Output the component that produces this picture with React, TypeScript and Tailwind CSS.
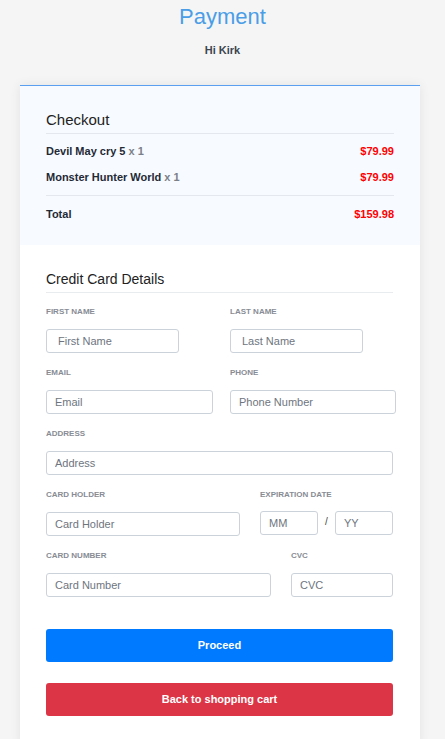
const font = { fontFamily: '"Liberation Sans", Arial, sans-serif' };

type Item = { name: string; qty: number; price: string };

const items: Item[] = [
  { name: 'Devil May cry 5', qty: 1, price: '$79.99' },
  { name: 'Monster Hunter World', qty: 1, price: '$79.99' },
];

const Label = ({ children }: { children: React.ReactNode }) => (
  <div className="text-[8px] leading-[10px] font-bold uppercase text-[#888c94] mb-[11px]">
    {children}
  </div>
);

const Input = ({
  placeholder,
  className = '',
}: {
  placeholder: string;
  className?: string;
}) => (
  <input
    placeholder={placeholder}
    className={`h-[24px] border border-[#ccd2da] rounded-[3px] bg-white text-[11px] text-[#333] placeholder:text-[#6e7580] outline-none px-[8px] ${className}`}
    style={font}
  />
);

/**
 * Payment page
 */
const App = () => {
  return (
    <div className="min-h-screen bg-[#f5f5f5] text-[#222]" style={font}>
      {/* Header */}
      <header className="pt-[4px] text-center">
        <h1 className="text-[22px] leading-[26px] text-[#4a9de6]">Payment</h1>
        <p className="mt-[13px] text-[11px] leading-[14px] font-bold text-[#3d4650]">
          Hi Kirk
        </p>
      </header>

      {/* Card */}
      <div className="mt-[28px] ml-[20px] w-[400px] bg-white border-t border-[#5a9ff0] shadow-[0_0_10px_rgba(0,0,0,0.08)]">
        {/* Checkout */}
        <section className="bg-[#f7faff] px-[26px] pt-[25px] pb-[24px]">
          <h2 className="text-[15px] leading-[18px] pb-[4px] border-b border-[#e4e8ee]">
            Checkout
          </h2>
          <div className="pt-[10px] pb-[11px] border-b border-[#e4e8ee] space-y-[12px]">
            {items.map((item, index) => (
              <div
                key={index}
                className="flex justify-between text-[11px] leading-[14px] font-bold"
              >
                <span className="text-[#1f2a36]">
                  {item.name} <span className="text-[#7b8088]">x {item.qty}</span>
                </span>
                <span className="text-[#ff0000]">{item.price}</span>
              </div>
            ))}
          </div>
          <div className="pt-[11px] flex justify-between text-[11px] leading-[14px] font-bold">
            <span className="text-[#1f2a36]">Total</span>
            <span className="text-[#ff0000]">$159.98</span>
          </div>
        </section>

        {/* Credit Card Details */}
        <section className="pr-[27px] pl-[26px] pt-[25px] pb-[30px]">
          <h2 className="text-[14px] leading-[18px] pb-[4px] border-b border-[#e9ecef]">
            Credit Card Details
          </h2>

          <div className="pt-[14px] space-y-[15px]">
            <div className="grid grid-cols-[166px_1fr] gap-x-[18px]">
              <div>
                <Label>First name</Label>
                <Input placeholder="First Name" className="w-[133px] px-[11px]" />
              </div>
              <div>
                <Label>Last name</Label>
                <Input placeholder="Last Name" className="w-[133px] px-[11px]" />
              </div>
            </div>

            <div className="grid grid-cols-[167px_1fr] gap-x-[17px]">
              <div>
                <Label>Email</Label>
                <Input placeholder="Email" className="w-full" />
              </div>
              <div>
                <Label>Phone</Label>
                <Input placeholder="Phone Number" className="w-[166px]" />
              </div>
            </div>

            <div>
              <Label>Address</Label>
              <Input placeholder="Address" className="w-full" />
            </div>

            <div className="grid grid-cols-[194px_1fr] gap-x-[20px]">
              <div>
                <Label>Card holder</Label>
                <Input placeholder="Card Holder" className="w-full" />
              </div>
              <div>
                <Label>Expiration date</Label>
                <div className="flex items-center">
                  <Input placeholder="MM" className="w-[58px]" />
                  <span className="w-[17px] text-center text-[10px] text-[#444] -mt-[4px]">/</span>
                  <Input placeholder="YY" className="w-[58px]" />
                </div>
              </div>
            </div>

            <div className="grid grid-cols-[225px_1fr] gap-x-[20px]">
              <div>
                <Label>Card number</Label>
                <Input placeholder="Card Number" className="w-full" />
              </div>
              <div>
                <Label>CVC</Label>
                <Input placeholder="CVC" className="w-full" />
              </div>
            </div>
          </div>

          {/* Actions */}
          <button className="mt-[32px] w-full h-[33px] rounded-[3px] bg-[#007bff] text-white text-[11px] font-bold">
            Proceed
          </button>
          <button className="mt-[21px] w-full h-[33px] rounded-[3px] bg-[#dc3545] text-white text-[11px] font-bold">
            Back to shopping cart
          </button>
        </section>
      </div>
    </div>
  );
};

export default App;
